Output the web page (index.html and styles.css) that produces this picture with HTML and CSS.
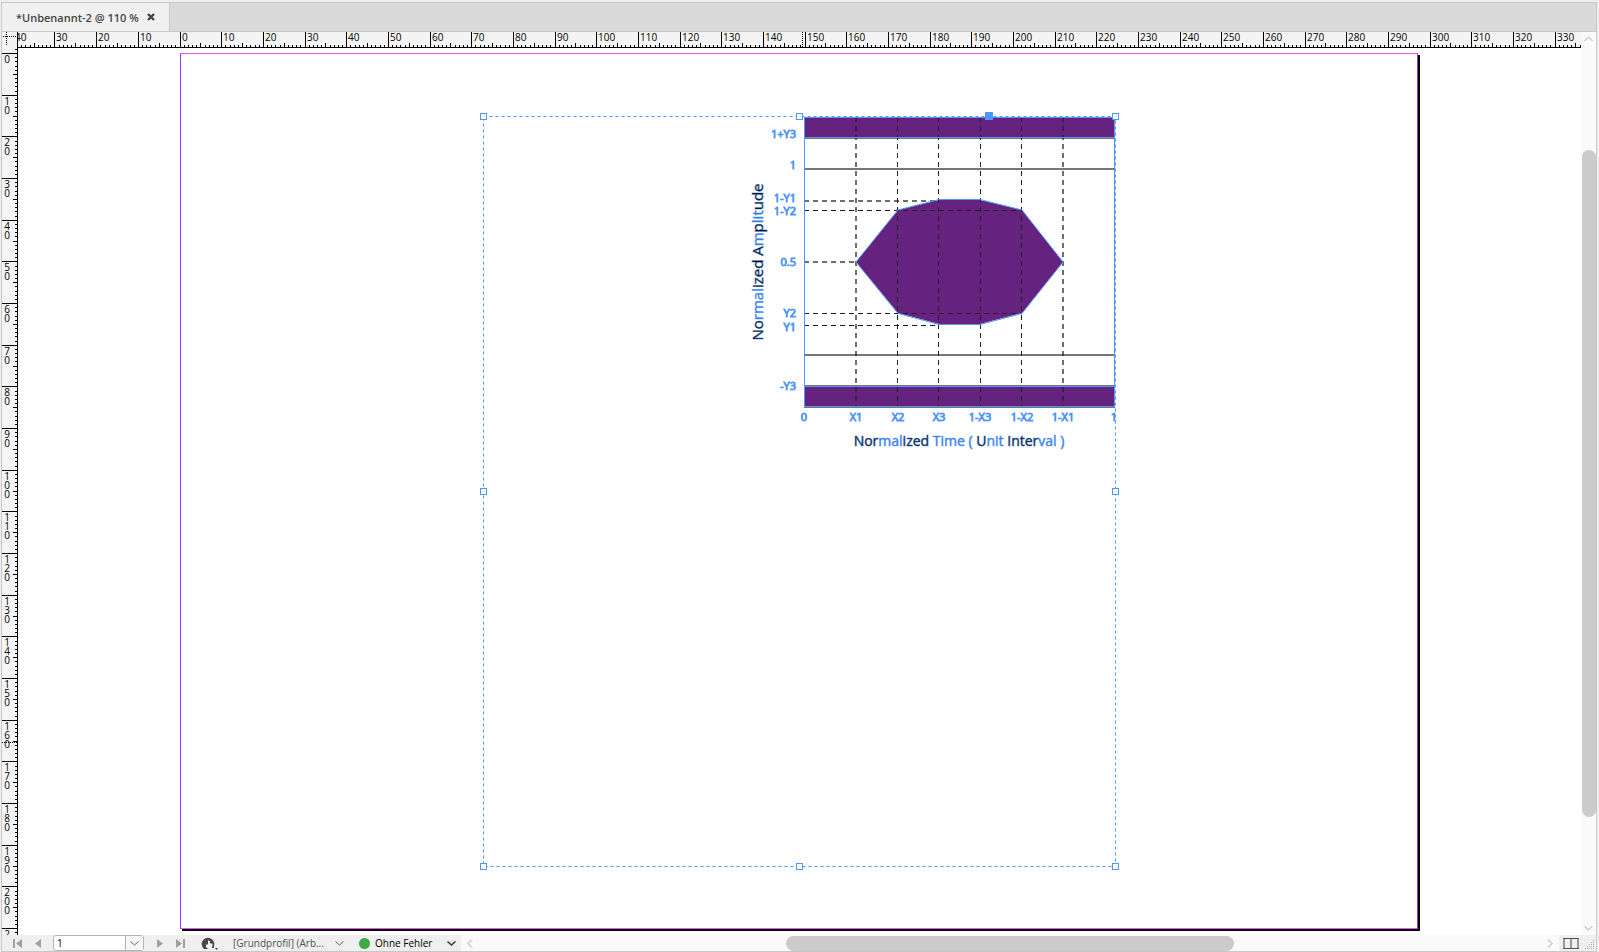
FILE: index.html
```html
<!DOCTYPE html>
<html lang="de">
<head>
<meta charset="utf-8">
<title>Unbenannt-2</title>
<link rel="stylesheet" href="styles.css">
</head>
<body>
<div class="window">
  <header class="tabs">
    <div class="tab">
      <span class="tab-title">*Unbenannt-2 @ 110 %</span>
      <button class="tab-close" type="button" aria-label="Schließen">
        <svg width="8" height="8" viewBox="0 0 8 8"><path d="M1 1L7 7M7 1L1 7" stroke="#454545" stroke-width="2.4"/></svg>
      </button>
    </div>
  </header>

  <main class="workspace">
    <div class="corner">
      <svg width="15" height="16" viewBox="0 0 15 16"><path d="M4.500 0V14M1 4.500H15" stroke="#000" stroke-dasharray="1 1" shape-rendering="crispEdges"/></svg>
    </div>
    <svg class="ruler-x" id="ruler-x"></svg>
    <svg class="ruler-y" id="ruler-y"></svg>
    <svg class="canvas" role="img" aria-label="Seite mit Augendiagramm">
      <g transform="translate(-18 -48)">
        <path class="shadow" d="M182 929H1418V55H1420V931H182Z"/>
        <path class="margin-y" d="M180.500 53V929M1417.500 53V929"/>
        <path class="margin-x" d="M180 53.500H1418M181 928.500H1417"/>

        <rect class="band" x="805" y="117" width="309" height="21"/>
        <rect class="band" x="805" y="386" width="309" height="21"/>
        <path class="eye" d="M856 262L898 210L939 200H980L1022 210L1063 262L1022 313L980 324H939L898 313Z"/>
        <path class="rule" d="M804 138H1115M804 169H1115M804 355H1115M804 386H1115M804 407H1115"/>
        <path class="dash-soft" d="M856 117V407M1063 117V407M804 201H939M804 262H856"/>
        <path class="dash" d="M897.500 117V407M938.500 117V407M980.500 117V407M1021.500 117V407M804 210.500H1022M804 313.500H1022M804 325.500H939"/>
        <path class="outline" d="M804.500 117V407M1114.500 117V407M804 137.500H1115M804 386.500H1115M804 406.500H1115M804 117.500H1115"/>
        <path class="eye-line" d="M856 262L898 210L939 199.500H980L1022 210L1063 262L1022 313.500L980 324.500H939L898 313.500Z"/>

        <g class="label label-y">
          <text x="796" y="138">1+Y3</text>
          <text x="796" y="169">1</text>
          <text x="796" y="202">1-Y1</text>
          <text x="796" y="215">1-Y2</text>
          <text x="796" y="266">0.5</text>
          <text x="796" y="317">Y2</text>
          <text x="796" y="331">Y1</text>
          <text x="796" y="390">-Y3</text>
        </g>
        <g class="label label-x">
          <text x="804" y="421">0</text>
          <text x="856" y="421">X1</text>
          <text x="898" y="421">X2</text>
          <text x="939" y="421">X3</text>
          <text x="980" y="421">1-X3</text>
          <text x="1022" y="421">1-X2</text>
          <text x="1063" y="421">1-X1</text>
          <text x="1114" y="421">1</text>
        </g>
        <text class="axis axis-x" x="959" y="446">Nor<tspan class="lit">mal</tspan>ized <tspan class="lit">Time ( </tspan>U<tspan class="lit">nit </tspan>Inter<tspan class="lit">val )</tspan></text>
        <text class="axis axis-y" transform="translate(763 262) rotate(-90)">No<tspan class="lit">rmal</tspan>ized A<tspan class="lit">m</tspan>p<tspan class="lit">lit</tspan>ude</text>

        <rect class="frame" x="483.500" y="116.500" width="632" height="750"/>
        <g class="handle">
          <rect x="480.500" y="113.500" width="6" height="6"/>
          <rect x="796.500" y="113.500" width="6" height="6"/>
          <rect x="1112.500" y="113.500" width="6" height="6"/>
          <rect x="480.500" y="488.500" width="6" height="6"/>
          <rect x="1112.500" y="488.500" width="6" height="6"/>
          <rect x="480.500" y="863.500" width="6" height="6"/>
          <rect x="796.500" y="863.500" width="6" height="6"/>
          <rect x="1112.500" y="863.500" width="6" height="6"/>
        </g>
        <rect class="knob" x="985" y="112" width="8" height="8"/>
      </g>
    </svg>
    <div class="scroll scroll-v">
      <button class="arrow" type="button" aria-label="Nach oben"><svg width="9" height="6" viewBox="0 0 9 6"><path d="M.5 5L4.500 1L8.500 5"/></svg></button>
      <div class="track track-v"><div class="thumb thumb-v"></div></div>
      <button class="arrow" type="button" aria-label="Nach unten"><svg width="9" height="6" viewBox="0 0 9 6"><path d="M.5 1L4.500 5L8.500 1"/></svg></button>
    </div>
  </main>

  <footer class="status">
    <div class="pager">
      <button class="nav nav-first" type="button" aria-label="Erste Seite"><svg width="9" height="9" viewBox="0 0 9 9"><path d="M0 0H2V9H0ZM9 0V9L3 4.500Z"/></svg></button>
      <button class="nav nav-prev" type="button" aria-label="Vorige Seite"><svg width="6" height="9" viewBox="0 0 6 9"><path d="M6 0V9L0 4.500Z"/></svg></button>
      <div class="page-box">
        <input class="page-input" type="text" value="1" aria-label="Seite">
        <button class="page-menu" type="button" aria-label="Seite wählen"><svg class="chev" width="9" height="5" viewBox="0 0 9 5"><path d="M.5 .5L4.500 4L8.500 .5"/></svg></button>
      </div>
      <button class="nav nav-next" type="button" aria-label="Nächste Seite"><svg width="6" height="9" viewBox="0 0 6 9"><path d="M0 0V9L6 4.500Z"/></svg></button>
      <button class="nav nav-last" type="button" aria-label="Letzte Seite"><svg width="9" height="9" viewBox="0 0 9 9"><path d="M7 0H9V9H7ZM0 0V9L6 4.500Z"/></svg></button>
      <button class="open" type="button" aria-label="Preflight"><svg width="18" height="13" viewBox="0 0 18 13"><path d="M3 12A6.300 6.300 0 1 1 13 9V11H11V7H8V3.500H7V7.500H5V10L7 12Z" fill="#484848"/><path d="M8 4H9V6.500H11.500V9.500H7.500V5Z" fill="#efefef"/><path d="M14 11H17L15.500 13Z" fill="#484848"/></svg></button>
      <div class="pick pick-profile">
        <select class="pick-select" aria-label="Profil"><option>[Grundprofil] (Arb...</option></select>
        <svg class="chev" width="9" height="5" viewBox="0 0 9 5"><path d="M.5 .5L4.500 4L8.500 .5"/></svg>
      </div>
      <span class="dot"></span>
      <div class="pick pick-errors">
        <select class="pick-select pick-dark" aria-label="Preflight-Status"><option>Ohne Fehler</option></select>
        <svg class="chev chev-dark" width="9" height="5" viewBox="0 0 9 5"><path d="M.5 .5L4.500 4L8.500 .5"/></svg>
      </div>
    </div>
    <div class="scroll scroll-h">
      <button class="arrow arrow-h" type="button" aria-label="Nach links"><svg width="6" height="9" viewBox="0 0 6 9"><path d="M5 .5L1 4.500L5 8.500"/></svg></button>
      <div class="track track-h"><div class="thumb thumb-h"></div></div>
      <button class="arrow arrow-h" type="button" aria-label="Nach rechts"><svg width="6" height="9" viewBox="0 0 6 9"><path d="M1 .5L5 4.500L1 8.500"/></svg></button>
    </div>
    <div class="corner-tools">
      <button class="split" type="button" aria-label="Layoutansicht teilen"><svg width="16" height="11" viewBox="0 0 16 11"><path d="M1 0V11M15 0V11M8 0V11" stroke="#999" stroke-width="2"/><path d="M0 .5H16M0 10.500H16" stroke="#555"/></svg></button>
      <svg class="grip" width="9" height="9" viewBox="0 0 9 9"><path d="M0 8.500H9M2 6.500H9M4 4.500H9M6 2.500H9M8 .5H9" stroke="#aaa" stroke-dasharray="1 1"/></svg>
    </div>
  </footer>
</div>
<script src="rulers.js"></script>
</body>
</html>
```
FILE: styles.css
```css
* { box-sizing: border-box; }

body {
  margin: 0;
  background: #efefef;
  font-family: "Open Sans", "Noto Sans", sans-serif;
}

button { padding: 0; border: 0; background: none; display: flex; align-items: center; justify-content: center; }

.window {
  display: flex;
  flex-direction: column;
  height: 100vh;
  margin: 0 2px 0 1px;
  padding-top: 2px;
  border-bottom: 1px solid #c8c8c8;
}

.tabs {
  display: flex;
  height: 30px;
  background: #dadada;
  border: 1px solid #c8c8c8;
}

.tab {
  display: flex;
  align-items: center;
  gap: 8px;
  padding: 0 14px;
  background: #f0f0f0;
  border-right: 1px solid #c8c8c8;
}

.tab-title { font-size: 11px; font-weight: 600; color: #454545; white-space: nowrap; }

.workspace {
  flex: 1;
  min-height: 0;
  display: grid;
  grid-template-columns: 16px minmax(0, 1fr) 15px;
  grid-template-rows: 16px minmax(0, 1fr);
  border: solid #c8c8c8;
  border-width: 0 1px;
  background: #fff;
}

.corner { background: #f4f4f4; border-right: 1px solid #000; }
.corner svg { display: block; }

.ruler-x { width: 100%; height: 16px; background: #f4f4f4; overflow: hidden; }
.ruler-y { width: 16px; height: 100%; background: #f4f4f4; overflow: hidden; }
.ruler-x text, .ruler-y text { font-size: 10px; fill: #000; }
.ruler-y text { text-anchor: middle; }
.tick { fill: #000; shape-rendering: crispEdges; }
.cursor { stroke: #000; stroke-dasharray: 1 1; shape-rendering: crispEdges; }

.canvas { grid-column: 2; grid-row: 2; width: 100%; height: 100%; background: #fff; overflow: hidden; }
.shadow { fill: #000; }
.margin-y { stroke: #9034ff; }
.margin-x { stroke: #f050f0; }

.band, .eye { fill: #65237f; }
.rule { stroke: #777; stroke-width: 2; }
.dash-soft { stroke: #231f20; stroke-opacity: 0.65; stroke-width: 2; stroke-dasharray: 5 4; }
.dash { stroke: #231f20; stroke-width: 1; stroke-dasharray: 5 4; }
.outline { stroke: #4f97ff; }
.eye-line { fill: none; stroke: #4f97ff; }

.label { font-size: 11px; fill: #1c4f9e; stroke: #4f97ff; stroke-width: 0.8; }
.label-y { text-anchor: end; }
.label-x { text-anchor: middle; }
.axis { text-anchor: middle; fill: #000; stroke: #2a60b4; stroke-width: 0.5; }
.axis-x { font-size: 14px; }
.axis-y { font-size: 15px; }
.lit { fill: #2f74dc; stroke: #4f97ff; }

.frame { fill: none; stroke: #4f97ff; stroke-dasharray: 3 3; }
.handle { fill: #fff; stroke: #4f97ff; }
.knob { fill: #4f97ff; }

.scroll { display: flex; background: #fafafa; }
.scroll-v { grid-column: 3; grid-row: 1 / 3; flex-direction: column; }
.scroll-h { flex: 1; }
.arrow { height: 14px; width: 100%; }
.arrow-h { height: 100%; width: 18px; }
.arrow path { fill: none; stroke: #a0a0a0; }
.track { flex: 1; display: flex; }
.track-v { flex-direction: column; }
.track-v::before { content: ""; flex: 104; }
.track-v::after { content: ""; flex: 104; }
.track-h::before { content: ""; flex: 307; }
.track-h::after { content: ""; flex: 307; }
.thumb { background: #cbcbcb; border-radius: 8px; }
.thumb-v { flex: 667; margin-left: 1px; }
.thumb-h { flex: 448; margin-top: 1px; }

.status {
  display: flex;
  height: 16px;
  background: #efefef;
  border: solid #c8c8c8;
  border-width: 0 1px;
}

.pager { display: flex; align-items: center; width: 459px; padding-left: 11px; }
.nav path { fill: #a0a0a0; }
.nav-first { margin-right: 13px; }
.nav-prev { margin-right: 12px; }
.nav-next { margin: 0 13px; }
.open { margin: 0 14px 0 16px; }

.page-box {
  display: flex;
  width: 91px;
  height: 16px;
  background: #fff;
  border: 1px solid #b4b4b4;
  border-radius: 3px;
}
.page-input {
  width: 71px;
  padding: 0 3px;
  border: 0;
  background: none;
  font-family: inherit;
  font-size: 10px;
  line-height: 14px;
  color: #000;
}
.page-menu { flex: 1; border-left: 1px solid #b4b4b4; background: #f7f7f7; }

.chev { flex: none; pointer-events: none; }
.chev path { fill: none; stroke: #666; }
.chev-dark path { stroke: #333; stroke-width: 1.4; }

.pick { display: flex; align-items: center; }
.pick-profile { width: 111px; }
.pick-errors { width: 81px; }
.pick-select {
  flex: 1;
  min-width: 0;
  height: 16px;
  padding: 0;
  border: 0;
  appearance: none;
  background: none;
  font-family: inherit;
  font-size: 10px;
  line-height: 14px;
  color: #505050;
}
.pick-dark { color: #000; }
.dot { width: 11px; height: 11px; margin: 0 5px 0 15px; border-radius: 50%; background: #42a845; }

.corner-tools { display: flex; align-items: center; justify-content: space-between; width: 37px; padding: 0 2px 0 4px; }
.grip { align-self: flex-end; margin-bottom: 2px; }
```
FILE: rulers.js
```js
const NS = 'http://www.w3.org/2000/svg';
const MM = 1250 / 300;

function add(parent, name, attrs, text) {
  const el = document.createElementNS(NS, name);
  for (const key in attrs) el.setAttribute(key, attrs[key]);
  if (text !== undefined) el.textContent = text;
  parent.appendChild(el);
}

function tickLength(mm) {
  if (mm % 10 === 0) return 15;
  return mm % 5 === 0 ? 4 : 2;
}

// Horizontal ruler: the zero point lies 162px from its left edge.
const rx = document.getElementById('ruler-x');
const width = rx.getBoundingClientRect().width;
for (let mm = -40; 162 + mm * MM < width; mm++) {
  const x = Math.floor(162 + mm * MM);
  const len = tickLength(mm);
  add(rx, 'rect', { class: 'tick', x: x, y: 15 - len, width: 1, height: len });
  if (mm % 10 === 0) add(rx, 'text', { x: x + 2, y: 9 }, Math.abs(mm));
}
add(rx, 'rect', { class: 'tick', x: 0, y: 15, width: width, height: 1 });
add(rx, 'path', { class: 'cursor', d: 'M784.5 0V15' });

// Vertical ruler: the zero point lies 5px below its top edge.
const ry = document.getElementById('ruler-y');
const height = ry.getBoundingClientRect().height;
for (let mm = -1; 5 + mm * MM < height; mm++) {
  const y = Math.round(5 + mm * MM);
  const len = tickLength(mm);
  add(ry, 'rect', { class: 'tick', x: 15 - len, y: y, width: len, height: 1 });
  if (mm % 10 === 0) {
    [...String(mm)].forEach((digit, i) => add(ry, 'text', { x: 5, y: y + 10 + i * 9 }, digit));
  }
}
add(ry, 'rect', { class: 'tick', x: 15, y: 0, width: 1, height: height });
add(ry, 'path', { class: 'cursor', d: 'M0 694.5H15' });
```
